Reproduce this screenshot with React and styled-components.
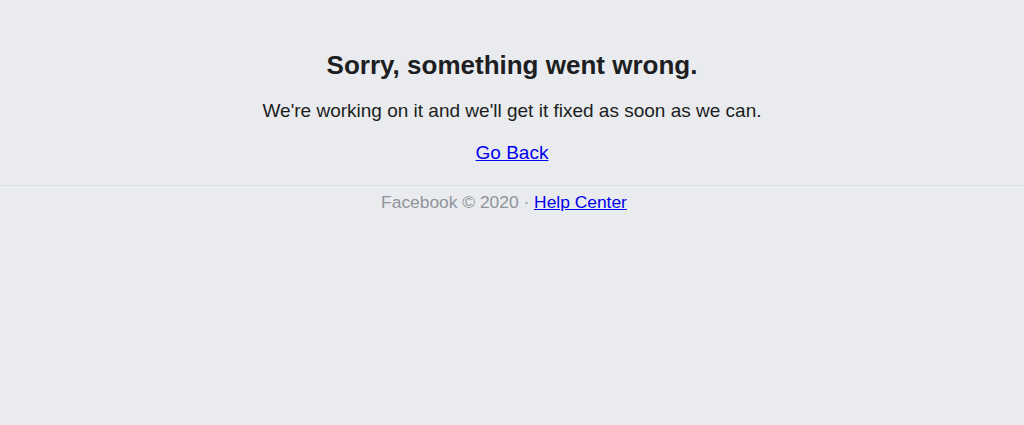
import React from 'react';
import styled, { createGlobalStyle } from 'styled-components';

const GlobalStyle = createGlobalStyle`
  html, body {
    margin: 0;
    padding: 0;
    background: #e9ebee;
  }
  body {
    font-family: "Liberation Sans", Arial, Helvetica, sans-serif;
    color: #1c1e21;
  }
`;

const Page = styled.div`
  min-height: 425px;
  background: #e9ebee;
`;

const Main = styled.main`
  text-align: center;
  padding: 48px 0 0;
`;

const Title = styled.h1`
  margin: 0;
  font-size: 26px;
  font-weight: bold;
  line-height: 34px;
  color: #1c1e21;
`;

const Message = styled.p`
  margin: 17px 0 0;
  font-size: 19px;
  line-height: 24px;
  color: #1c1e21;
`;

const BackLink = styled.a`
  display: inline-block;
  margin-top: 18px;
  font-size: 19px;
  line-height: 24px;
  color: #0000ee;
  text-decoration: underline;
`;

const Footer = styled.footer`
  margin-top: 20px;
  border-top: 1px solid #dadde1;
  padding: 4px 16px 0 0;
  text-align: center;
  font-size: 17.4px;
  line-height: 24px;
  color: #90949c;
`;

const FooterLink = styled.a`
  color: #0000ee;
  text-decoration: underline;
`;

export default function App() {
  return (
    <Page>
      <GlobalStyle />
      <Main>
        <Title>Sorry, something went wrong.</Title>
        <Message>We're working on it and we'll get it fixed as soon as we can.</Message>
        <BackLink href="#">Go Back</BackLink>
      </Main>
      <Footer>
        Facebook © 2020 · <FooterLink href="#">Help Center</FooterLink>
      </Footer>
    </Page>
  );
}
